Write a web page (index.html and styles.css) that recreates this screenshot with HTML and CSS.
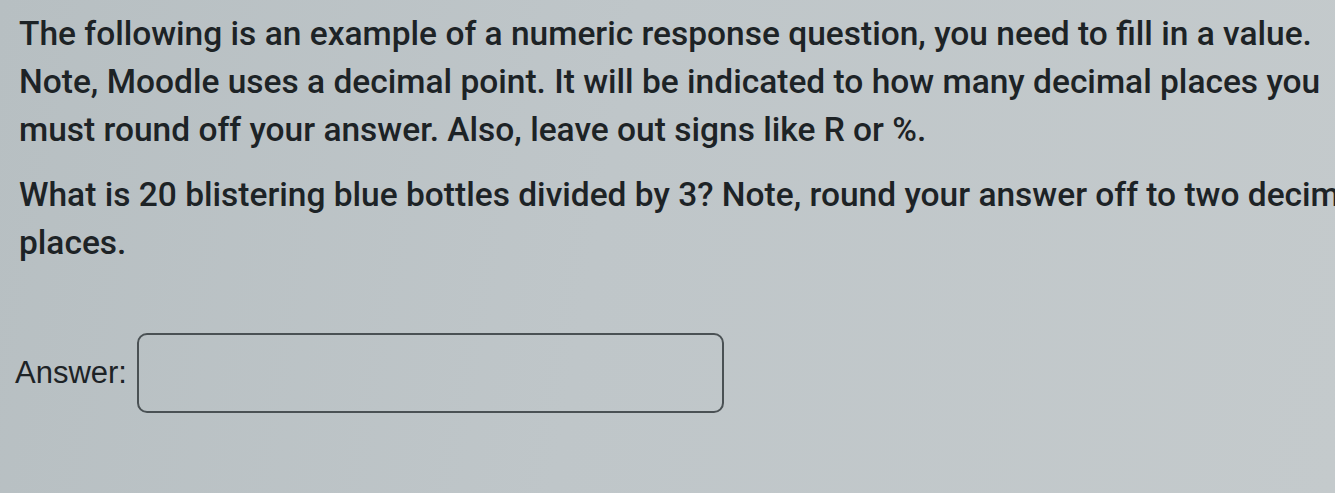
FILE: index.html
```html
<!DOCTYPE html>
<html lang="en">
<head>
    <meta charset="UTF-8">
    <meta name="viewport" content="width=device-width, initial-scale=1.0">
    <title>Numeric response</title>
    <link rel="stylesheet" href="styles.css">
</head>
<body>

    <div class="question">
        <p class="info">The following is an example of a numeric response question, you need to fill in a value. Note, Moodle uses a decimal point. It will be indicated to how many decimal places you must round off your answer. Also, leave out signs like R or %.</p>

        <p class="qtext">What is 20 blistering blue bottles divided by 3? Note, round your answer off to two decimal places.</p>

        <div class="ablock">
            <label for="answer">Answer:</label>
            <input type="text" id="answer">
        </div>
    </div>

</body>
</html>
```

FILE: styles.css
```css
html, body {
    height: 100%;
}
body {
    margin: 0;
    overflow: hidden;
    background: linear-gradient(100deg, #b7bfc2 0%, #bfc6c9 45%, #c4cacc 100%);
    color: #1d2326;
    font-family: Roboto, "Liberation Sans", sans-serif;
}
.question {
    width: 1360px;
    padding: 10px 0 0 19px;
}
p {
    margin: 0;
    font-size: 33.5px;
    font-weight: 500;
    line-height: 48px;
}
.info {
    margin-bottom: 17px;
}
.ablock {
    display: flex;
    align-items: center;
    gap: 10px;
    margin-top: 66px;
}
label {
    font-family: "Liberation Sans", Arial, sans-serif;
    font-size: 31px;
    margin-left: -4px;
}
input {
    width: 587px;
    height: 80px;
    box-sizing: border-box;
    background: transparent;
    border: 2px solid #4a5154;
    border-radius: 10px;
}
```
